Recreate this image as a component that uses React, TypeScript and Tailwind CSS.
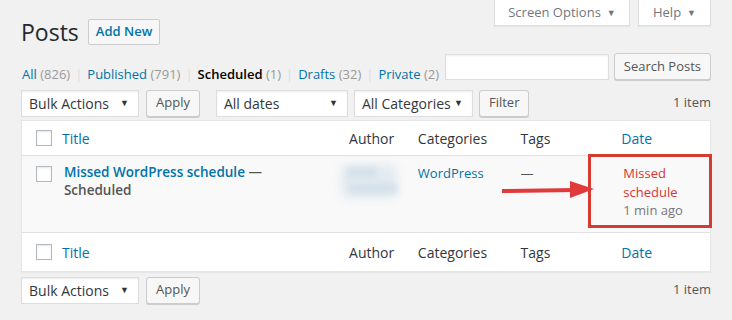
import React from "react";

const font = { fontFamily: '"Open Sans", "Liberation Sans", sans-serif' };

function Select({ label, w }: { label: string; w: string }) {
  return (
    <div className={`${w} h-[27px] bg-white border border-[#dddddd] shadow-[inset_0_1px_2px_rgba(0,0,0,0.07)] flex items-center justify-between pl-[7px] pr-[9px] text-[14px] text-[#32373c] whitespace-nowrap`}>
      <span>{label}</span>
      <span className="text-[9px] text-[#333]">▼</span>
    </div>
  );
}

function Btn({ label, cls = "" }: { label: string; cls?: string }) {
  return (
    <div className={`h-[27px] px-[9px] bg-[#f7f7f7] border border-[#cccccc] rounded-[3px] shadow-[0_1px_0_#cccccc] flex items-center text-[13px] text-[#555] whitespace-nowrap ${cls}`}>
      {label}
    </div>
  );
}

function Check() {
  return <div className="w-[16px] h-[16px] border border-[#b4b9be] bg-white shadow-[inset_0_1px_2px_rgba(0,0,0,0.1)]" />;
}

function HeaderRow({ top }: { top?: boolean }) {
  return (
    <div className={`flex items-center ${top ? "h-[35px] border-b" : "h-[39px] border-t"} bg-white border-[#e1e1e1] text-[14px] text-[#32373c]`}>
      <div className="w-[30px] flex justify-end pl-[11px]"><Check /></div>
      <div className="w-[288px] pl-[10px] text-[#0073aa]">Title</div>
      <div className="w-[69px] pl-[10px]">Author</div>
      <div className="w-[103px] pl-[10px]">Categories</div>
      <div className="w-[101px] pl-[10px]">Tags</div>
      <div className="w-[99px] pl-[10px] text-[#0073aa]">Date</div>
    </div>
  );
}

function Sep() {
  return <span className="text-[#ddd] px-[5px]">|</span>;
}

export default function App() {
  return (
    <div style={font} className="w-[732px] h-[320px] bg-[#f1f1f1] relative overflow-hidden">
      <div className="absolute top-0 right-[21px] flex gap-[8px]">
        <div className="w-[136px] h-[26px] bg-white border border-t-0 border-[#dddddd] shadow-[0_1px_1px_rgba(0,0,0,0.04)] flex items-center justify-center gap-[6px] text-[13px] text-[#72777c]">
          Screen Options <span className="text-[9px]">▼</span>
        </div>
        <div className="w-[73px] h-[26px] bg-white border border-t-0 border-[#dddddd] shadow-[0_1px_1px_rgba(0,0,0,0.04)] flex items-center justify-center gap-[6px] text-[13px] text-[#72777c]">
          Help <span className="text-[9px]">▼</span>
        </div>
      </div>

      <div className="pl-[21px] pr-[21px]">
        <div className="flex items-center pt-[18px] h-[46px]">
          <div className="text-[23px] text-[#23282d] leading-none">Posts</div>
          <div className="ml-[9px] h-[26px] px-[7px] bg-[#f7f7f7] border border-[#cccccc] rounded-[2px] flex items-center text-[13px] font-semibold text-[#0073aa]">Add New</div>
        </div>

        <div className="flex items-center justify-between mt-[7px] h-[27px]">
          <div className="text-[13px] text-[#555] flex items-center mt-[16px] pl-[1px] whitespace-nowrap">
            <span><span className="text-[#0073aa]">All</span> <span className="text-[#999]">(826)</span></span>
            <Sep />
            <span><span className="text-[#0073aa]">Published</span> <span className="text-[#999]">(791)</span></span>
            <Sep />
            <span><span className="text-black font-semibold">Scheduled</span> <span className="text-[#999]">(1)</span></span>
            <Sep />
            <span><span className="text-[#0073aa]">Drafts</span> <span className="text-[#999]">(32)</span></span>
            <Sep />
            <span><span className="text-[#0073aa]">Private</span> <span className="text-[#999]">(2)</span></span>
          </div>
          <div className="flex items-center gap-[5px]">
            <div className="w-[164px] h-[26px] bg-white border border-[#dddddd] shadow-[inset_0_1px_2px_rgba(0,0,0,0.07)]" />
            <Btn label="Search Posts" />
          </div>
        </div>

        <div className="flex items-center justify-between mt-[9px] h-[28px]">
          <div className="flex items-center">
            <Select label="Bulk Actions" w="w-[118px]" />
            <Btn label="Apply" cls="ml-[7px]" />
            <div className="ml-[16px]"><Select label="All dates" w="w-[132px]" /></div>
            <div className="ml-[6px]"><Select label="All Categories" w="w-[119px]" /></div>
            <Btn label="Filter" cls="ml-[6px]" />
          </div>
          <div className="text-[13px] text-[#555]">1 item</div>
        </div>

        <div className="mt-[3px] border border-[#e5e5e5] shadow-[0_1px_1px_rgba(0,0,0,0.04)] bg-white relative">
          <HeaderRow top />
          <div className="flex h-[76px] bg-[#f9f9f9] text-[13px]">
            <div className="w-[30px] flex justify-end pl-[11px] pt-[10px]"><Check /></div>
            <div className="w-[288px] pl-[12px] pt-[7px] text-[13.5px] leading-[18px] font-semibold text-[#555] whitespace-nowrap">
              <span className="text-[#0073aa]">Missed WordPress schedule</span> —<br />Scheduled
            </div>
            <div className="w-[69px] relative">
              <div className="absolute left-[2px] top-[8px] w-[56px] h-[34px] bg-[#e3ebf1] blur-[5px] rounded-md" />
              <div className="absolute left-[8px] top-[12px] w-[30px] h-[9px] bg-[#d3e0ea] blur-[3px]" />
              <div className="absolute left-[10px] top-[28px] w-[48px] h-[9px] bg-[#d3e0ea] blur-[3px]" />
            </div>
            <div className="w-[103px] pl-[10px] pt-[8px] text-[#0073aa]">WordPress</div>
            <div className="w-[101px] pl-[10px] pt-[8px] text-[#555]">—</div>
            <div className="w-[99px] pl-[12px] pt-[8px] leading-[18.5px]">
              <div className="text-[#dc3232]">Missed<br />schedule</div>
              <div className="text-[#777]">1 min ago</div>
            </div>
          </div>
          <HeaderRow />
          <div className="absolute left-[566px] top-[33px] w-[124px] h-[74px] border-[3px] border-[#d63b30]" />
          <svg className="absolute left-[478px] top-[58px]" width="96" height="22" viewBox="0 0 96 22">
            <line x1="2" y1="12" x2="76" y2="11" stroke="#e03a3a" strokeWidth="4" />
            <polygon points="70,2 94,10 70,19" fill="#e03a3a" />
          </svg>
        </div>

        <div className="flex items-center justify-between mt-[4px] h-[28px]">
          <div className="flex items-center">
            <Select label="Bulk Actions" w="w-[118px]" />
            <Btn label="Apply" cls="ml-[7px]" />
          </div>
          <div className="text-[13px] text-[#555]">1 item</div>
        </div>
      </div>
    </div>
  );
}
